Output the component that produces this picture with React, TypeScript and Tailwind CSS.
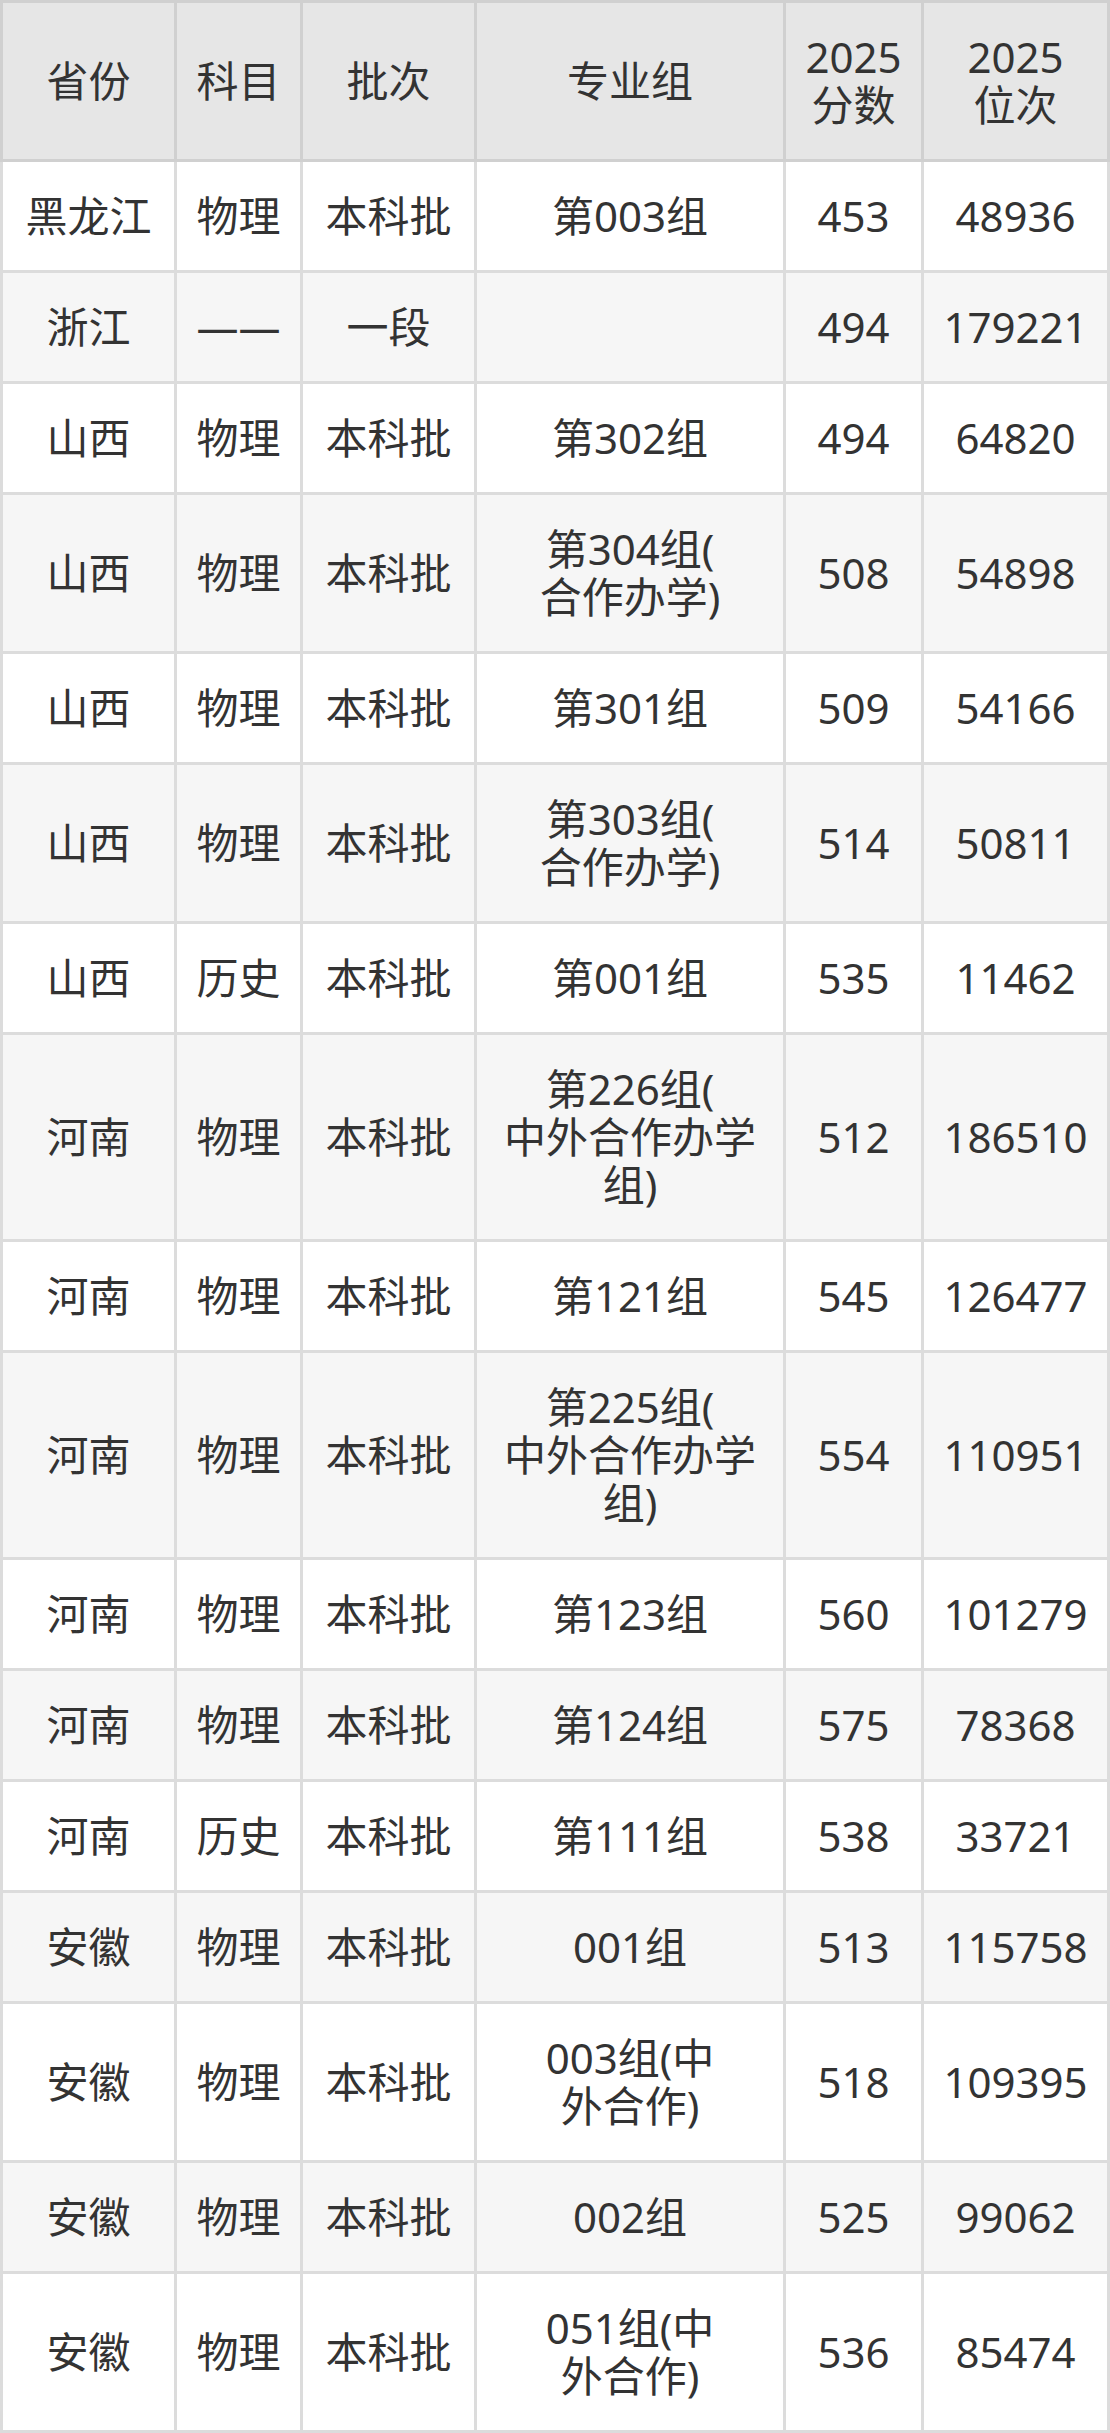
const HEAD: string[][] = [["省份"], ["科目"], ["批次"], ["专业组"], ["2025", "分数"], ["2025", "位次"]];

type Row = [string, string, string, string[], string, string];

const ROWS: Row[] = [
  ["黑龙江", "物理", "本科批", ["第003组"], "453", "48936"],
  ["浙江", "——", "一段", [""], "494", "179221"],
  ["山西", "物理", "本科批", ["第302组"], "494", "64820"],
  ["山西", "物理", "本科批", ["第304组(", "合作办学)"], "508", "54898"],
  ["山西", "物理", "本科批", ["第301组"], "509", "54166"],
  ["山西", "物理", "本科批", ["第303组(", "合作办学)"], "514", "50811"],
  ["山西", "历史", "本科批", ["第001组"], "535", "11462"],
  ["河南", "物理", "本科批", ["第226组(", "中外合作办学", "组)"], "512", "186510"],
  ["河南", "物理", "本科批", ["第121组"], "545", "126477"],
  ["河南", "物理", "本科批", ["第225组(", "中外合作办学", "组)"], "554", "110951"],
  ["河南", "物理", "本科批", ["第123组"], "560", "101279"],
  ["河南", "物理", "本科批", ["第124组"], "575", "78368"],
  ["河南", "历史", "本科批", ["第111组"], "538", "33721"],
  ["安徽", "物理", "本科批", ["001组"], "513", "115758"],
  ["安徽", "物理", "本科批", ["003组(中", "外合作)"], "518", "109395"],
  ["安徽", "物理", "本科批", ["002组"], "525", "99062"],
  ["安徽", "物理", "本科批", ["051组(中", "外合作)"], "536", "85474"],
];

function Cell({ lines, first, head, shade }: { lines: string[]; first: boolean; head?: boolean; shade?: boolean }) {
  const border = head ? "border-[#d0d0d0] border-t-[3px]" : "border-[#dcdcdc]";
  const bg = head ? "bg-[#e6e6e6]" : shade ? "bg-[#f6f6f6]" : "bg-white";
  return (
    <div
      className={`flex flex-col items-center justify-center text-center py-[30px] px-2 border-r-[3px] border-b-[3px] ${border} ${bg} ${first ? "border-l-[3px]" : ""}`}
    >
      {lines.map((l, i) => (
        <div key={i} className="whitespace-nowrap">
          {l}
        </div>
      ))}
    </div>
  );
}

export default function App() {
  return (
    <div className="w-[1110px] bg-white font-['Noto_Sans','Noto_Sans_CJK_SC',sans-serif] text-[42px] leading-[48px] text-[#333333]">
      <div className="grid grid-cols-[177px_126px_174px_309px_138px_186px]">
        {HEAD.map((h, i) => (
          <Cell key={`h${i}`} lines={h} first={i === 0} head />
        ))}
        {ROWS.map((r, ri) =>
          [[r[0]], [r[1]], [r[2]], r[3], [r[4]], [r[5]]].map((lines, ci) => (
            <Cell key={`${ri}-${ci}`} lines={lines} first={ci === 0} shade={ri % 2 === 1} />
          ))
        )}
      </div>
    </div>
  );
}
